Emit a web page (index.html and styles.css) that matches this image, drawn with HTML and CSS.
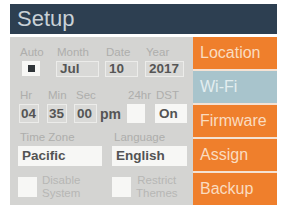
FILE: index.html
```html
<!DOCTYPE html>
<html>
<head>
<meta charset="utf-8">
<link rel="stylesheet" href="styles.css">
</head>
<body>
<div class="app">
  <div class="header">Setup</div>
  <div class="main">
    <div class="panel">
      <div class="row r1">
        <div class="col c1-1"><div class="lbl">Auto</div><div class="chk"><span class="dot"></span></div></div>
        <div class="col c1-2"><div class="lbl">Month</div><div class="fld w43">Jul</div></div>
        <div class="col c1-3"><div class="lbl">Date</div><div class="fld w33">10</div></div>
        <div class="col c1-4"><div class="lbl">Year</div><div class="fld w39">2017</div></div>
      </div>
      <div class="row r2">
        <div class="col c2-1"><div class="lbl">Hr</div><div class="fld h2 w20">04</div></div>
        <div class="col c2-2"><div class="lbl">Min</div><div class="fld h2 w20">35</div></div>
        <div class="col c2-3"><div class="lbl">Sec</div><div class="inline"><div class="fld h2 w23">00</div><span class="pm">pm</span></div></div>
        <div class="col c2-4"><div class="lbl">24hr</div><div class="wbox h2 w18"></div></div>
        <div class="col c2-5"><div class="lbl">DST</div><div class="wbox h2 w32 txt">On</div></div>
      </div>
      <div class="row r3">
        <div class="col c3-1"><div class="lbl">Time Zone</div><div class="wbox h3 w84 txt">Pacific</div></div>
        <div class="col c3-2"><div class="lbl">Language</div><div class="wbox h3 w75 txt">English</div></div>
      </div>
      <div class="row r4">
        <div class="col4 c4-1"><div class="wbox cb"></div><div class="cbtxt">Disable<br>System</div></div>
        <div class="col4 c4-2"><div class="wbox cb"></div><div class="cbtxt">Restrict<br>Themes</div></div>
      </div>
    </div>
    <div class="nav">
      <div class="btn">Location</div>
      <div class="btn active">Wi-Fi</div>
      <div class="btn">Firmware</div>
      <div class="btn">Assign</div>
      <div class="btn">Backup</div>
    </div>
  </div>
</div>
</body>
</html>
```
FILE: styles.css
```css
html, body {
  margin: 0;
  padding: 0;
  background: #ffffff;
}
body {
  width: 287px;
  height: 209px;
  overflow: hidden;
  font-family: "Liberation Sans", Arial, sans-serif;
}
.app {
  padding: 4px 10px 0 10px;
}
.header {
  height: 30px;
  line-height: 30px;
  background: #2d3f51;
  color: #c9d1d7;
  font-size: 22px;
  padding-left: 7px;
}
.main {
  margin-top: 3px;
  display: flex;
  height: 168px;
}
.panel {
  width: 175px;
  padding-left: 8px;
  background: #d4d4d2;
}
.row {
  display: flex;
}
.col {
  display: flex;
  flex-direction: column;
}
.lbl {
  font-size: 11.5px;
  line-height: 12px;
  height: 12px;
  color: #aeaeac;
  padding-left: 1px;
  white-space: nowrap;
}
.r1 { padding-top: 9px; }
.r1 .lbl { margin-bottom: 3px; }
.c1-1 { width: 38px; }
.c1-1 .lbl { padding-left: 2px; }
.c1-2 { width: 49px; }
.c1-3 { width: 40px; }
.chk {
  width: 18px;
  height: 15px;
  margin-left: 4px;
  background: #f7f7f5;
  display: flex;
  align-items: center;
  justify-content: center;
}
.dot {
  width: 7px;
  height: 7px;
  background: #2f3438;
}
.fld {
  box-sizing: border-box;
  height: 16px;
  border: 1px solid #ececea;
  background: #d9d9d7;
  color: #555555;
  font-weight: bold;
  font-size: 13.5px;
  line-height: 14px;
  padding-left: 3px;
}
.w43 { width: 43px; }
.w33 { width: 33px; }
.w39 { width: 39px; }
.w20 { width: 20px; padding-left: 1px; }
.w23 { width: 23px; padding-left: 2px; }
.w18 { width: 18px; }
.w32 { width: 32px; }
.w84 { width: 84px; }
.w75 { width: 75px; }

.r2 { padding-top: 12px; }
.r2 .lbl { margin-bottom: 3px; }
.h2 { height: 19px; line-height: 17px; }
.c2-1 { width: 28px; margin-left: 1px; }
.c2-2 { width: 27px; }
.c2-3 { width: 53px; }
.c2-3 .lbl { padding-left: 2px; }
.c2-4 { width: 28px; }
.inline { display: flex; align-items: center; }
.pm {
  margin-left: 3px;
  font-weight: bold;
  font-size: 14px;
  color: #555555;
}
.wbox {
  box-sizing: border-box;
  background: #f7f7f5;
}
.txt {
  color: #535353;
  font-weight: bold;
  font-size: 13.5px;
  padding-left: 4px;
  line-height: 19px;
}
.r3 { padding-top: 8px; }
.r3 .lbl { padding-left: 2px; margin-bottom: 3px; }
.h3 { height: 20px; line-height: 20px; }
.c3-1 { width: 94px; }
.r4 { padding-top: 8px; }
.col4 {
  display: flex;
  align-items: center;
}
.c4-1 { width: 94px; }
.cb {
  width: 19px;
  height: 20px;
}
.cbtxt {
  margin-left: 5px;
  font-size: 11.5px;
  line-height: 13px;
  color: #b7b7b5;
  text-align: center;
}
.nav {
  width: 84px;
  display: flex;
  flex-direction: column;
  gap: 2px;
  background: #f4e2d4;
}
.btn {
  height: 32px;
  line-height: 32px;
  background: #ef7f2c;
  color: #fadcc0;
  font-size: 16px;
  padding-left: 7px;
}
.btn.active {
  background: #a8c4cc;
  color: #e3eef0;
}
```
